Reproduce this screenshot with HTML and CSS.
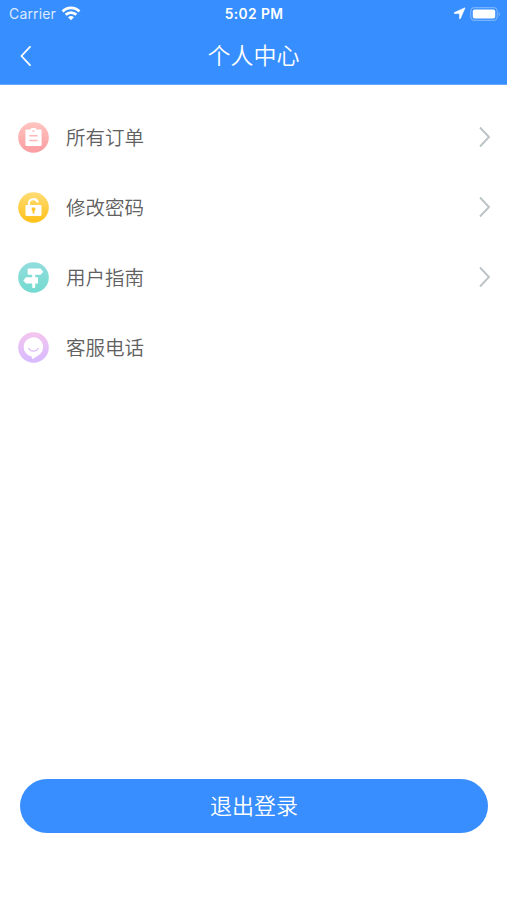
FILE: index.html
```html
<!DOCTYPE html>
<html lang="zh-CN">
<head>
<meta charset="utf-8">
<meta name="viewport" content="width=device-width, initial-scale=1">
<title>个人中心</title>
<link rel="stylesheet" href="styles.css">
</head>
<body>
<div class="screen">
  <header class="header">
    <div class="status">
      <div class="status-left">
        <span class="carrier">Carrier</span>
        <svg class="wifi" width="20" height="15" viewBox="0 0 20 15" fill="none" stroke="#fff" stroke-width="2.8"><path d="M1.6 5.4C6.2 .7 13.8 .7 18.4 5.4M4.7 8.8C7.6 5.9 12.4 5.9 15.3 8.8"/><path d="M10 14.3 7 11.2Q10 8.7 13 11.2Z" fill="#fff" stroke="none"/></svg>
      </div>
      <span class="time">5:02 PM</span>
      <div class="status-right">
        <svg width="13" height="13" viewBox="0 0 13 13" fill="#fff" stroke="#fff" stroke-width=".6"><path d="M12 1 7.3 11.7Q6.6 12.2 6.5 11.3V6.6H1.7Q.4 6.3 1.4 5.6L11.4 1Q12 .6 12 1Z"/></svg>
        <svg width="31" height="14" viewBox="0 0 31 14"><rect x=".7" y=".7" width="26.6" height="12.6" rx="3.7" fill="none" stroke="#79b2ff" stroke-width="1.2"/><rect x="2.8" y="2.5" width="22.4" height="9" rx="1.8" fill="#fff"/><path d="M28.7 4.7Q31.6 7 28.7 9.3Z" fill="#79b2ff"/></svg>
      </div>
    </div>
    <div class="nav">
      <svg class="back" width="12" height="22" viewBox="0 0 12 22" fill="none" stroke="#fff" stroke-width="1.8" stroke-linecap="round" stroke-linejoin="round"><path d="M10 1.8 1.4 11 10 20.2"/></svg>
      <h1 class="title">个人中心</h1>
    </div>
  </header>
  <main class="menu">
    <a class="row">
      <svg class="icon" viewBox="0 0 31 31"><defs><linearGradient id="red" x2="0" y2="1"><stop stop-color="#ffc5c0"/><stop offset="1" stop-color="#fb9ca1"/></linearGradient></defs><circle cx="15.5" cy="15.5" r="15.3" fill="url(#red)"/><path d="M8.2 7.4H12.5Q12.8 6 14 6H17Q18.2 6 18.5 7.4H22.8Q23.6 7.4 23.6 8.3V22.8Q23.6 24 22.4 24H8.6Q7.4 24 7.4 22.8V8.3Q7.4 7.4 8.2 7.4Z" fill="#fff"/><path d="M14.6 9H16.4M11.3 13.8H19.7M11.3 18.5H19.7" stroke="#fdb6b7" stroke-width="1.5"/></svg>
      <span class="label">所有订单</span>
      <svg class="chevron" viewBox="0 0 12 22"><path d="M1 1.5 10 11 1 20.5"/></svg>
    </a>
    <a class="row">
      <svg class="icon" viewBox="0 0 31 31"><defs><linearGradient id="gold" x2="0" y2="1"><stop stop-color="#ffdc76"/><stop offset="1" stop-color="#ffc116"/></linearGradient></defs><circle cx="15.5" cy="15.5" r="15.3" fill="url(#gold)"/><path d="M11 14V11.2C11 6.2 18.7 5.7 19.8 10.5" fill="none" stroke="#fff" stroke-width="2.1"/><rect x="7.5" y="13" width="16" height="11" rx="1.3" fill="#fff"/><path d="M15.5 15.2A2 2 0 0 1 16.4 19V21.7H14.6V19A2 2 0 0 1 15.5 15.2Z" fill="#ffc52b"/></svg>
      <span class="label">修改密码</span>
      <svg class="chevron" viewBox="0 0 12 22"><path d="M1 1.5 10 11 1 20.5"/></svg>
    </a>
    <a class="row">
      <svg class="icon" viewBox="0 0 31 31"><defs><linearGradient id="teal" x2="0" y2="1"><stop stop-color="#91dddd"/><stop offset="1" stop-color="#74dacf"/></linearGradient></defs><circle cx="15.5" cy="15.5" r="15.3" fill="url(#teal)"/><path d="M10.8 6.5H22.5L25.3 9.7 22.5 12.8H17.2V15.3H20V21.5H17.2V25.5Q15.4 26.8 14.2 25.5V21.5H8L5.3 18.4 8 15.3H14.2V12.8H10.8Q9.6 12.8 9.6 11.6V7.7Q9.6 6.5 10.8 6.5Z" fill="#fff"/></svg>
      <span class="label">用户指南</span>
      <svg class="chevron" viewBox="0 0 12 22"><path d="M1 1.5 10 11 1 20.5"/></svg>
    </a>
    <a class="row">
      <svg class="icon" viewBox="0 0 31 31"><defs><linearGradient id="violet" x2="0" y2="1"><stop stop-color="#f5c5ee"/><stop offset="1" stop-color="#d6baff"/></linearGradient></defs><circle cx="15.5" cy="15.5" r="15.3" fill="url(#violet)"/><path d="M15.5 5.2A9.8 9.8 0 0 1 19.3 24L14.5 27.2 13.5 24.6A9.8 9.8 0 0 1 15.5 5.2Z" fill="#fff"/><path d="M10.8 16.5C12.7 20 18.3 20 20.2 16.5" fill="none" stroke="#dfbef7" stroke-width="1.4" stroke-linecap="round"/></svg>
      <span class="label">客服电话</span>
    </a>
  </main>
  <button class="logout">退出登录</button>
</div>
</body>
</html>
```
FILE: styles.css
```css
* {
  box-sizing: border-box;
}

body {
  margin: 0;
  background: #fff;
  font-family: "Noto Sans CJK SC", sans-serif;
}

.screen {
  height: 900px;
  display: flex;
  flex-direction: column;
}

.header {
  height: 85px;
  flex-shrink: 0;
  background: #368eff;
  border-bottom: 1px solid #65a9ff;
  color: #fff;
}

.status {
  height: 27px;
  padding: 0 6px 0 9px;
  display: grid;
  grid-template-columns: 1fr auto 1fr;
  align-items: center;
  font: 14px/27px Inter, sans-serif;
}

.status-left,
.status-right {
  display: flex;
  align-items: center;
}

.status-left {
  gap: 5px;
}

.carrier {
  color: #dceaff;
  letter-spacing: 0.15px;
}

.status-right {
  justify-content: flex-end;
  gap: 4px;
}

.time {
  margin-right: 2px;
  padding-top: 1px;
  font-size: 13.8px;
  line-height: 26px;
  font-weight: 600;
  letter-spacing: 0.4px;
}

.nav {
  height: 57px;
  padding: 0 20px;
  display: grid;
  grid-template-columns: 1fr auto 1fr;
  align-items: center;
}

.title {
  margin: 0;
  padding-bottom: 3px;
  font-size: 23px;
  font-weight: 350;
  line-height: 34px;
}

.menu {
  padding: 17px 16px 0 18px;
}

.row {
  height: 70px;
  display: flex;
  align-items: center;
}

.icon {
  width: 31px;
  height: 31px;
}

.label {
  flex: 1;
  margin-left: 17px;
  color: #606060;
  font-size: 19.5px;
  font-weight: 350;
  line-height: 30px;
}

.chevron {
  width: 12px;
  height: 22px;
  fill: none;
  stroke: #bcc3c7;
  stroke-width: 1.9;
}

.logout {
  height: 54px;
  margin: auto 19px 67px 20px;
  padding: 0 0 3px;
  border: 0;
  border-radius: 27px;
  background: #388eff;
  color: #fff;
  font: 350 22px/51px "Noto Sans CJK SC", sans-serif;
}
```
